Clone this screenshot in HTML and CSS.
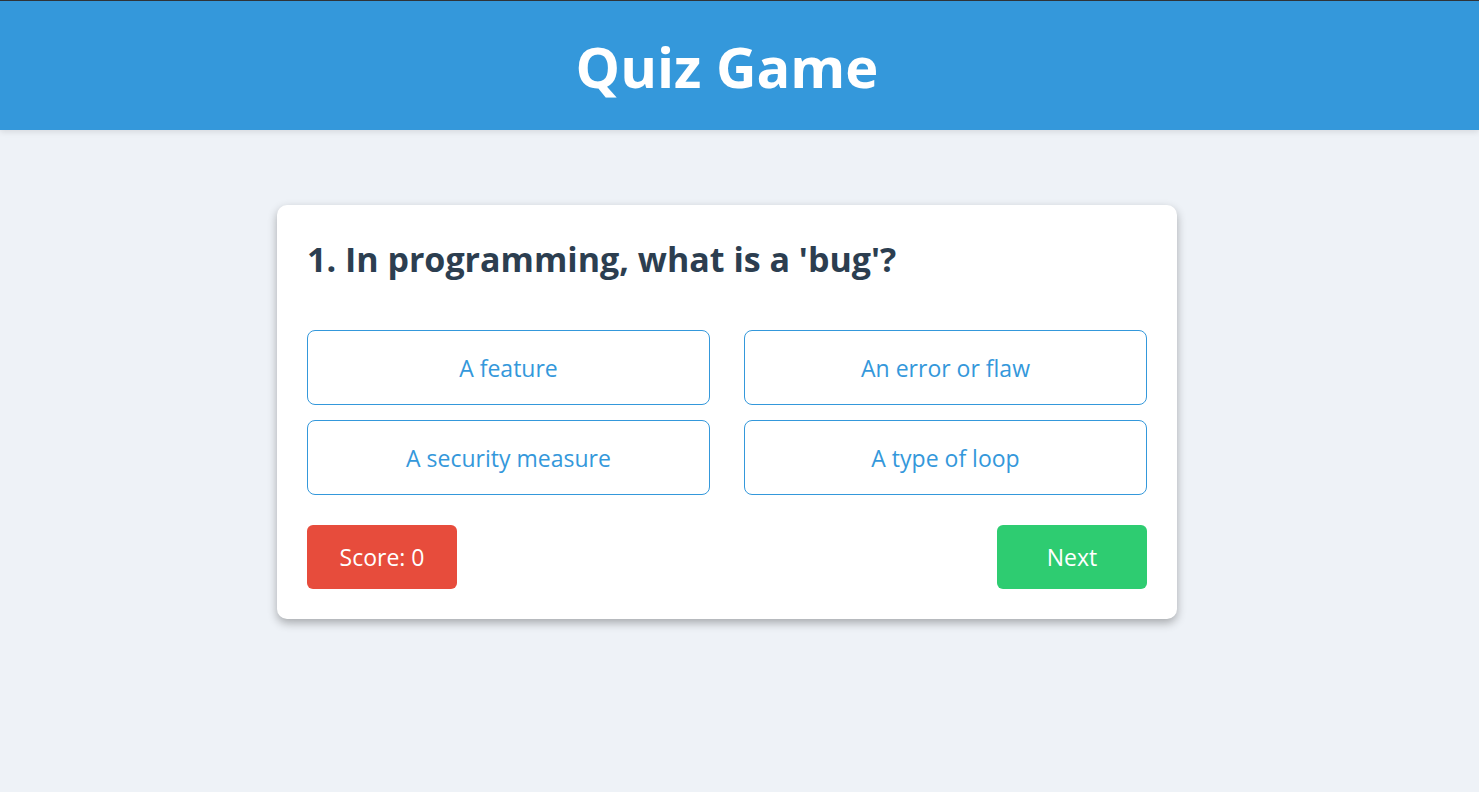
FILE: index.html
```html
<!DOCTYPE html>
<html lang="en">
<head>
<meta charset="utf-8">
<title>Quiz Game</title>
<link rel="stylesheet" href="styles.css">
</head>
<body>
<header class="site-header">
  <h1 class="site-title">Quiz Game</h1>
</header>
<main class="page">
  <section class="quiz-card">
    <h2 class="question">1. In programming, what is a 'bug'?</h2>
    <div class="options">
      <button class="option">A feature</button>
      <button class="option">An error or flaw</button>
      <button class="option">A security measure</button>
      <button class="option">A type of loop</button>
    </div>
    <div class="controls">
      <div class="score">Score: 0</div>
      <button class="next">Next</button>
    </div>
  </section>
</main>
</body>
</html>
```

FILE: styles.css
```css
* { box-sizing: border-box; }
html, body { margin: 0; padding: 0; }
body {
  background: #eef2f7;
  font-family: "Open Sans", "Noto Sans", sans-serif;
  color: #2c3e50;
  min-height: 792px;
}
.site-header {
  background: #3498db;
  border-top: 1px solid #2f3338;
  height: 130px;
  padding-right: 25px;
  display: flex;
  align-items: center;
  justify-content: center;
  box-shadow: 0 2px 6px rgba(0,0,0,0.1);
}
.site-title {
  margin: 0;
  color: #fff;
  font-size: 56px;
  font-weight: 700;
}
.page {
  display: flex;
  justify-content: center;
  padding-top: 75px;
  padding-right: 25px;
}
.quiz-card {
  width: 900px;
  background: #fff;
  border-radius: 10px;
  box-shadow: 0 4px 10px rgba(0,0,0,0.3);
  padding: 30px;
}
.question {
  margin: -8px 0 0;
  height: 103px;
  font-size: 34px;
  font-weight: 700;
  line-height: 65px;
}
.options {
  display: grid;
  grid-template-columns: 1fr 1fr;
  column-gap: 34px;
  row-gap: 15px;
}
.option {
  height: 75px;
  background: #fff;
  border: 1px solid #3498db;
  border-radius: 8px;
  color: #3498db;
  font-family: inherit;
  font-size: 23px;
  cursor: pointer;
}
.controls {
  display: flex;
  justify-content: space-between;
  margin-top: 30px;
}
.score, .next {
  width: 150px;
  height: 64px;
  border-radius: 6px;
  color: #fff;
  font-family: inherit;
  font-size: 23px;
  display: flex;
  align-items: center;
  justify-content: center;
  border: none;
}
.score { background: #e74c3c; }
.next { background: #2ecc71; }
```
